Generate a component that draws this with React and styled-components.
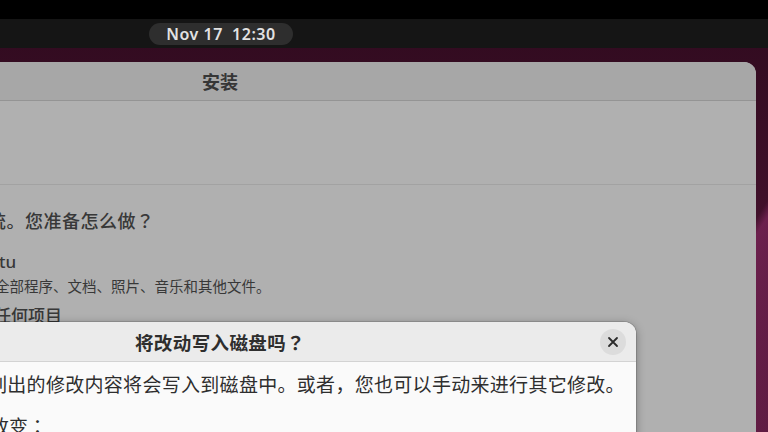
import React from "react";
import styled, { createGlobalStyle } from "styled-components";

const GlobalStyle = createGlobalStyle`
  html, body {
    margin: 0;
    padding: 0;
    overflow: hidden;
    background: #000;
  }
`;

const latin = `"Noto Sans", "Noto Sans CJK SC", sans-serif`;
const cjk = `"Noto Sans CJK SC", "Noto Sans", sans-serif`;

const Screen = styled.div`
  width: 768px;
  height: 432px;
  display: flex;
  flex-direction: column;
  overflow: hidden;
  font-family: ${cjk};
  background:
    linear-gradient(122deg, transparent 0%, transparent 86%, rgba(130, 40, 95, 0.65) 87%, rgba(110, 30, 80, 0.2) 100%),
    linear-gradient(180deg, #2f0a1e 0%, #3f1029 45%, #5c1b3f 100%),
    linear-gradient(90deg, #4b1536 0%, #3c0e28 70%);
`;

const Letterbox = styled.div`
  height: 19px;
  background: #000;
  flex: none;
`;

const TopBar = styled.div`
  height: 29px;
  flex: none;
  background: #151515;
  display: flex;
  align-items: center;
`;

const Clock = styled.div`
  margin-left: 149px;
  width: 144px;
  height: 22px;
  border-radius: 11px;
  background: #2e2e2e;
  color: #e2e2e2;
  font-family: ${latin};
  font-size: 16px;
  font-weight: 600;
  letter-spacing: 0.5px;
  display: flex;
  align-items: center;
  justify-content: center;
  white-space: pre;
`;

const Desktop = styled.div`
  flex: 1;
  position: relative;
  padding-top: 14px;
  display: flex;
`;

const Window = styled.div`
  margin-left: -316px;
  width: 1072px;
  flex: none;
  border-radius: 12px 12px 0 0;
  background: #b0b0b0;
  overflow: hidden;
  display: flex;
  flex-direction: column;
`;

const Header = styled.div`
  height: ${(p) => p.h}px;
  flex: none;
  background: ${(p) => p.bg};
  border-bottom: 1px solid ${(p) => p.line};
  display: flex;
  align-items: center;
  justify-content: center;
  position: relative;
`;

const Title = styled.div`
  font-size: ${(p) => p.size}px;
  font-weight: 700;
  color: ${(p) => p.color};
  letter-spacing: ${(p) => p.spacing || 0}px;
`;

const Banner = styled.div`
  height: 83px;
  flex: none;
  border-bottom: 1px solid #a2a2a2;
`;

const Body = styled.div`
  padding-left: 316px;
  display: flex;
  flex-direction: column;
  color: #383838;
`;

const Line = styled.div`
  font-family: ${(p) => (p.latin ? latin : cjk)};
  font-size: ${(p) => p.size}px;
  font-weight: ${(p) => p.weight || 400};
  margin-left: ${(p) => p.indent}px;
  margin-top: ${(p) => p.top}px;
  line-height: ${(p) => p.lh}px;
  letter-spacing: ${(p) => p.spacing || 0}px;
  white-space: nowrap;
`;

/* centred full-width punctuation, as the installer's font draws it */
const Punct = styled.span`
  font-family: "Noto Sans CJK JP", "Noto Sans CJK SC", sans-serif;
`;

const Dialog = styled.div`
  position: absolute;
  left: -196px;
  top: 274px;
  width: 832px;
  height: 200px;
  border-radius: 12px 12px 0 0;
  background: #fafafa;
  overflow: hidden;
  box-shadow: 0 0 0 1px rgba(0, 0, 0, 0.12), 0 2px 10px rgba(0, 0, 0, 0.35);
  display: flex;
  flex-direction: column;
`;

const CloseButton = styled.div`
  position: absolute;
  right: 10px;
  top: 7px;
  width: 26px;
  height: 26px;
  border-radius: 50%;
  background: #dcdcdc;
  display: flex;
  align-items: center;
  justify-content: center;
`;

const DialogBody = styled.div`
  padding-left: 196px;
  color: #2e2e2e;
  display: flex;
  flex-direction: column;
`;

const CloseIcon = () => (
  <svg width="12" height="12" viewBox="0 0 12 12">
    <path d="M2 2 L10 10 M10 2 L2 10" stroke="#2b2b2b" strokeWidth="1.8" strokeLinecap="round" />
  </svg>
);

export default function App() {
  return (
    <>
      <GlobalStyle />
      <Screen>
        <Letterbox />
        <TopBar>
          <Clock>{"Nov 17  12:30"}</Clock>
        </TopBar>
        <Desktop>
          <Window>
            <Header h={38} bg="#a7a7a7" line="#949494">
              <Title size={18} color="#363636">安装</Title>
            </Header>
            <Banner />
            <Body>
              <Line size={18} weight={500} indent={-12} top={21} lh={28} spacing={0.5}>
                统。您准备怎么做<Punct>？</Punct>
              </Line>
              <Line latin size={17} weight={500} indent={-1} top={16} lh={24}>tu</Line>
              <Line size={14.5} indent={-5} top={2} lh={20}>全部程序、文档、照片、音乐和其他文件。</Line>
              <Line size={17} weight={500} indent={-6} top={7} lh={24}>任何项目</Line>
            </Body>
          </Window>
          <Dialog>
            <Header h={39} bg="#ebebeb" line="#d3d3d3">
              <Title size={18.5} color="#2e2e2e" spacing={0.4}>
                将改动写入磁盘吗<Punct>？</Punct>
              </Title>
              <CloseButton>
                <CloseIcon />
              </CloseButton>
            </Header>
            <DialogBody>
              <Line size={19} indent={-12} top={9} lh={26} spacing={0.3}>
                列出的修改内容将会写入到磁盘中。或者，您也可以手动来进行其它修改。
              </Line>
              <Line size={19} indent={-10} top={16} lh={26}>
                改变<Punct>：</Punct>
              </Line>
            </DialogBody>
          </Dialog>
        </Desktop>
      </Screen>
    </>
  );
}
